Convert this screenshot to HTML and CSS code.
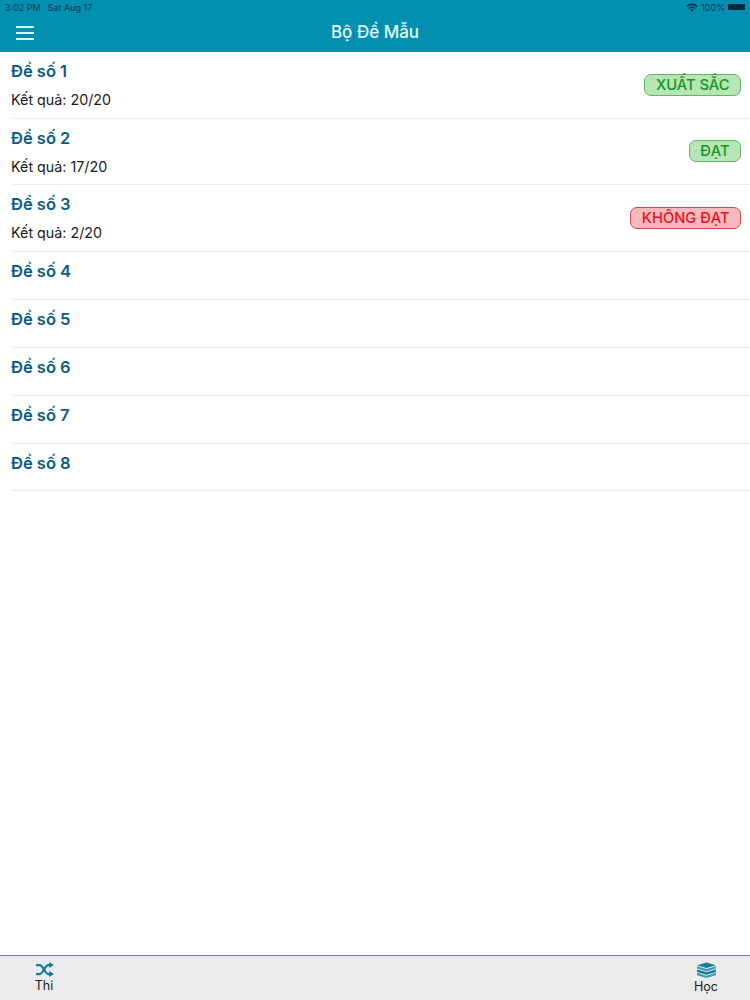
FILE: index.html
```html
<!DOCTYPE html>
<html>
  <head>
    <title>Bộ Đề Mẫu</title>
    <meta name="viewport" content="width=device-width, initial-scale=1" />
    <link rel="stylesheet" href="styles.css">
  </head>
  <body>
    <header class="topbar">
      <div class="status">
        <div class="status-time">
          <span>3:02 PM</span>
          <span>Sat Aug 17</span>
        </div>
        <div class="status-right">
          <svg class="wifi" viewBox="0 0 12 9" width="12" height="9">
            <path d="M0.3 3 A8 8 0 0 1 11.7 3 L10.6 4.1 A6.4 6.4 0 0 0 1.4 4.1 Z" />
            <path d="M2.2 4.9 A5.3 5.3 0 0 1 9.8 4.9 L8.7 6 A3.7 3.7 0 0 0 3.3 6 Z" />
            <path d="M4.1 6.8 A2.7 2.7 0 0 1 7.9 6.8 L6 8.8 Z" />
          </svg>
          <span>100%</span>
          <span class="battery"></span>
        </div>
      </div>
      <div class="navbar">
        <div class="menu-btn"><span></span><span></span><span></span></div>
        <h1>Bộ Đề Mẫu</h1>
      </div>
    </header>

    <ul class="list">
      <li class="item has-result">
        <div>
          <div class="item-title">Đề số 1</div>
          <div class="item-result">Kết quả: 20/20</div>
        </div>
        <span class="badge pass">XUẤT SẮC</span>
      </li>
      <li class="item has-result">
        <div>
          <div class="item-title">Đề số 2</div>
          <div class="item-result">Kết quả: 17/20</div>
        </div>
        <span class="badge pass">ĐẠT</span>
      </li>
      <li class="item has-result">
        <div>
          <div class="item-title">Đề số 3</div>
          <div class="item-result">Kết quả: 2/20</div>
        </div>
        <span class="badge fail">KHÔNG ĐẠT</span>
      </li>
      <li class="item"><div class="item-title">Đề số 4</div></li>
      <li class="item"><div class="item-title">Đề số 5</div></li>
      <li class="item"><div class="item-title">Đề số 6</div></li>
      <li class="item"><div class="item-title">Đề số 7</div></li>
      <li class="item short"><div class="item-title">Đề số 8</div></li>
    </ul>

    <footer class="tabbar">
      <div class="tab">
        <svg viewBox="0 0 20 16" width="19" height="15" fill="none" stroke="#0f7f98" stroke-width="2.4">
          <path d="M1 3.2 H5 C8.5 3.2 10.5 12.8 14 12.8 H16" />
          <path d="M1 12.8 H5 C8.5 12.8 10.5 3.2 14 3.2 H16" />
          <path d="M15 0 L20 3.2 L15 6.4 Z" fill="#0f7f98" stroke="none" />
          <path d="M15 9.6 L20 12.8 L15 16 Z" fill="#0f7f98" stroke="none" />
        </svg>
        <span>Thi</span>
      </div>
      <div class="tab">
        <svg viewBox="0 0 22 17" width="21" height="16">
          <path d="M1 3.5 L11 0.5 L21 3.5 L11 6.5 Z" fill="#0f7f98" />
          <path d="M1 4.5 V7 L11 10 L21 7 V4.5 L11 7.5 Z" fill="#3f9db2" />
          <path d="M1 8 V10.5 L11 13.5 L21 10.5 V8 L11 11 Z" fill="#0f7f98" />
          <path d="M1 11.5 V14 L11 17 L21 14 V11.5 L11 14.5 Z" fill="#3f9db2" />
        </svg>
        <span>Học</span>
      </div>
    </footer>
  </body>
</html>
```

FILE: styles.css
```css
html, body {
  height: 100%;
}

body {
  margin: 0;
  font-family: "Inter", "Liberation Sans", sans-serif;
  display: flex;
  flex-direction: column;
  background-color: #fff;
}

.topbar {
  height: 52px;
  background-color: #0390b0;
  flex-shrink: 0;
}

.status {
  height: 14px;
  padding: 0 5px;
  display: flex;
  justify-content: space-between;
  align-items: center;
  font-size: 9px;
  color: #0b3450;
}

.status-time {
  display: flex;
  gap: 7px;
}

.status-right {
  display: flex;
  align-items: center;
  gap: 3px;
}

.wifi {
  fill: #0b3450;
}

.battery {
  width: 17px;
  height: 6px;
  background-color: #0b2a40;
  border-radius: 1px;
}

.navbar {
  height: 35px;
  position: relative;
  display: flex;
  align-items: center;
  justify-content: center;
}

.navbar h1 {
  margin: 0;
  font-size: 17px;
  font-weight: 500;
  color: #e6f7fb;
}

.menu-btn {
  position: absolute;
  left: 16px;
  top: 12px;
  width: 18px;
  display: flex;
  flex-direction: column;
  gap: 4px;
}

.menu-btn span {
  height: 2px;
  background-color: #d8f6fb;
}

.list {
  list-style: none;
  margin: 0;
  padding: 0;
  flex: 1;
}

.item {
  height: 48px;
  box-sizing: border-box;
  margin-left: 11px;
  padding-top: 7px;
  padding-right: 9px;
  border-bottom: 1px solid #ececec;
  display: flex;
  justify-content: space-between;
  align-items: center;
}

.item > .item-title {
  align-self: flex-start;
}

.short {
  height: 47px;
}

.has-result {
  height: 66.5px;
  padding-top: 6px;
  padding-bottom: 6px;
}

.item-title {
  font-size: 16.5px;
  font-weight: 600;
  line-height: 24px;
  color: #0b5c85;
}

.item-result {
  margin-top: 7px;
  font-size: 14.3px;
  line-height: 20px;
  color: #1a1a1a;
}

.badge {
  box-sizing: border-box;
  padding: 0 10.5px;
  height: 22px;
  line-height: 20px;
  border-radius: 7px;
  font-size: 14.7px;
  font-weight: 500;
}

.pass {
  background-color: #b9e4b5;
  border: 1px solid #5fb56a;
  color: #0b9a1e;
}

.fail {
  background-color: #f6b9bc;
  border: 1px solid #c9464f;
  color: #ee0f1c;
}

.tabbar {
  height: 45px;
  flex-shrink: 0;
  box-sizing: border-box;
  border-top: 1px solid #3aa3b5;
  background-color: #ebebeb;
  display: flex;
  justify-content: space-between;
}

.tab {
  width: 88px;
  display: flex;
  flex-direction: column;
  align-items: center;
  padding-top: 6px;
  gap: 1px;
  font-size: 12.5px;
  color: #1a1a1a;
}
```
